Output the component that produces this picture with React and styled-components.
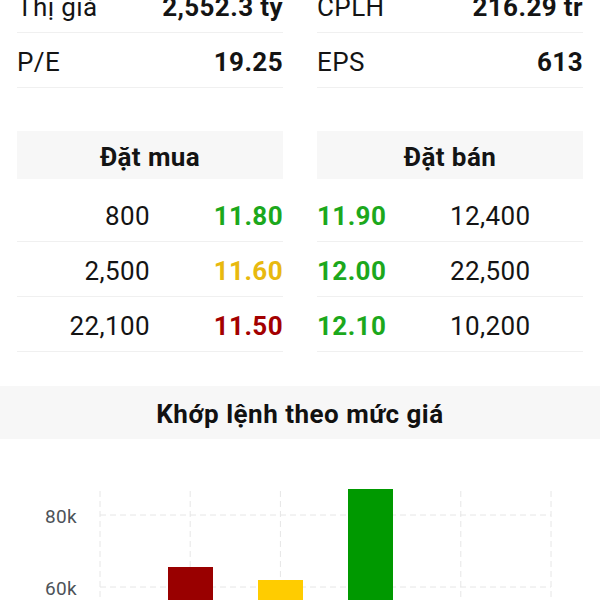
import React from "react";
import styled, { createGlobalStyle } from "styled-components";

const Global = createGlobalStyle`
  html, body { margin: 0; padding: 0; background: #ffffff; }
  body { font-family: Roboto, "Noto Sans", "Liberation Sans", sans-serif; color: #111; overflow: hidden; }
`;

const Page = styled.div`
  width: 600px;
  margin-top: -22px;
`;

const TwoCols = styled.div`
  display: grid;
  grid-template-columns: 1fr 1fr;
  column-gap: 34px;
  padding: 0 17px;
`;

const StatRow = styled.div`
  box-sizing: border-box;
  height: 55px;
  padding-top: 4px;
  display: flex;
  align-items: center;
  justify-content: space-between;
  border-bottom: 1px solid #f0f0f0;
  font-size: 26px;
  letter-spacing: 0.4px;
`;

const StatLabel = styled.span`
  font-weight: 400;
  color: #141414;
`;

const StatValue = styled.span`
  font-weight: 700;
  color: #141414;
`;

const OrderSection = styled(TwoCols)`
  margin-top: 43px;
`;

const Panel = styled.div`
  display: flex;
  flex-direction: column;
`;

const PanelHeader = styled.div`
  box-sizing: border-box;
  height: 48px;
  padding-top: 4px;
  background: #f7f7f7;
  display: flex;
  align-items: center;
  justify-content: center;
  font-size: 26px;
  letter-spacing: 0.4px;
  font-weight: 700;
  color: #141414;
  margin-bottom: 8px;
`;

const OrderRow = styled.div`
  box-sizing: border-box;
  height: 55px;
  padding-top: 4px;
  display: grid;
  grid-template-columns: 1fr 1fr;
  align-items: center;
  border-bottom: 1px solid #f0f0f0;
  font-size: 26px;
  letter-spacing: 0.4px;
  text-align: ${(p) => (p.$side === "buy" ? "right" : "left")};
`;

const Qty = styled.span`
  color: #141414;
  font-weight: 400;
`;

const Price = styled.span`
  font-weight: 700;
  color: ${(p) => p.$color};
`;

const ChartSection = styled.section`
  margin-top: 34px;
`;

const ChartTitle = styled.div`
  box-sizing: border-box;
  height: 53px;
  padding-top: 2px;
  background: #f7f7f7;
  display: flex;
  align-items: center;
  justify-content: center;
  font-size: 26px;
  letter-spacing: 0.5px;
  font-weight: 700;
  color: #111;
`;

const ChartSvg = styled.svg`
  display: block;
`;

const GREEN = "#1ca81c";
const YELLOW = "#e8b90f";
const RED = "#a30000";

const stats = [
  [["Thị giá", "2,552.3 tỷ"], ["P/E", "19.25"]],
  [["CPLH", "216.29 tr"], ["EPS", "613"]],
];

const buys = [
  ["800", "11.80", GREEN],
  ["2,500", "11.60", YELLOW],
  ["22,100", "11.50", RED],
];

const sells = [
  ["11.90", "12,400", GREEN],
  ["12.00", "22,500", GREEN],
  ["12.10", "10,200", GREEN],
];

const bars = [
  { x: 168, top: 128, color: "#990000" },
  { x: 258, top: 141, color: "#ffcc00" },
  { x: 348, top: 50, color: "#009900" },
];

function Chart() {
  const vx = [0, 1, 2, 3, 4, 5].map((i) => 100 + i * 90.2);
  const hy = [76, 148];
  return (
    <ChartSvg width="600" height="200" viewBox="0 0 600 200">
      {vx.map((x) => (
        <line key={x} x1={x} x2={x} y1={52} y2={200} stroke="#e6e6e6" strokeWidth="1" strokeDasharray="6 4" />
      ))}
      {hy.map((y) => (
        <line key={y} x1={100} x2={551} y1={y} y2={y} stroke="#e6e6e6" strokeWidth="1" strokeDasharray="6 4" />
      ))}
      <text x="77" y="77" textAnchor="end" dominantBaseline="central" fontSize="19" letterSpacing="0.3" fill="#4d5359" fontFamily="Roboto, sans-serif">80k</text>
      <text x="77" y="149" textAnchor="end" dominantBaseline="central" fontSize="19" letterSpacing="0.3" fill="#4d5359" fontFamily="Roboto, sans-serif">60k</text>
      {bars.map((b) => (
        <rect key={b.x} x={b.x} y={b.top} width="45" height={200 - b.top} fill={b.color} />
      ))}
    </ChartSvg>
  );
}

export default function App() {
  return (
    <Page>
      <Global />
      <TwoCols>
        {stats.map((col, ci) => (
          <div key={ci}>
            {col.map(([l, v]) => (
              <StatRow key={l}>
                <StatLabel>{l}</StatLabel>
                <StatValue>{v}</StatValue>
              </StatRow>
            ))}
          </div>
        ))}
      </TwoCols>

      <OrderSection>
        <Panel>
          <PanelHeader>Đặt mua</PanelHeader>
          {buys.map(([q, p, c]) => (
            <OrderRow key={p} $side="buy">
              <Qty>{q}</Qty>
              <Price $color={c}>{p}</Price>
            </OrderRow>
          ))}
        </Panel>
        <Panel>
          <PanelHeader>Đặt bán</PanelHeader>
          {sells.map(([p, q, c]) => (
            <OrderRow key={p} $side="sell">
              <Price $color={c}>{p}</Price>
              <Qty>{q}</Qty>
            </OrderRow>
          ))}
        </Panel>
      </OrderSection>

      <ChartSection>
        <ChartTitle>Khớp lệnh theo mức giá</ChartTitle>
        <Chart />
      </ChartSection>
    </Page>
  );
}
